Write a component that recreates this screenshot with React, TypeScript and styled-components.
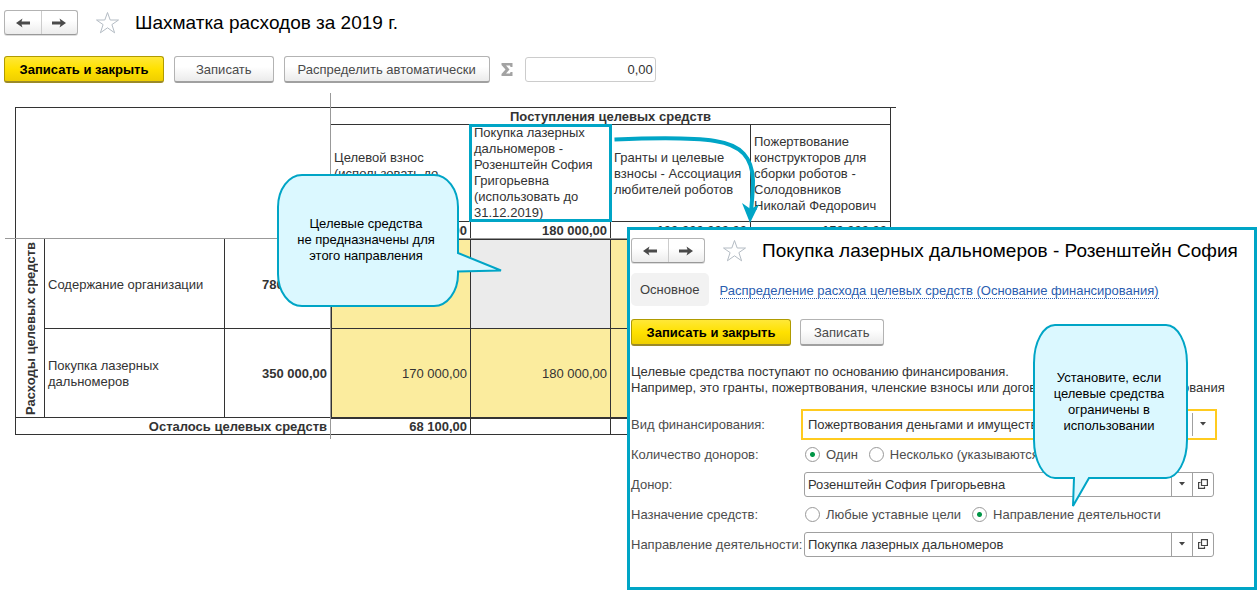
import React from 'react';
import styled, { createGlobalStyle, css } from 'styled-components';

const ACCENT = '#00a5c6';
const BUBBLE = '#dbf8ff';
const LINE = '#333';
const FREEZE = '#999';

const GlobalStyle = createGlobalStyle`
  *, *::before, *::after { box-sizing: border-box; }
  body {
    margin: 0;
    background: #fff;
    color: #333;
    font: 13px/16px 'Liberation Sans', Arial, sans-serif;
  }
  button, input, select { font: inherit; color: inherit; }
`;

const Page = styled.main`
  position: relative;
  min-height: 100vh;
`;

/* ---------- headers and command bars ---------- */

const TopArea = styled.div`
  display: flex;
  flex-direction: column;
  gap: 21px;
  padding: 10px 4px 0;
`;

const TitleBar = styled.header`
  display: flex;
  align-items: center;
  height: 25px;
`;

const NavGroup = styled.div`
  display: flex;
  width: 74px;
  height: 25px;
  border: 1px solid #b3b3b3;
  border-bottom-color: #999;
  border-radius: 3px;
  background: linear-gradient(#fff 40%, #ececec);
  box-shadow: 0 1px 0 #ddd;
`;

const NavButton = styled.button`
  flex: 1;
  display: flex;
  align-items: center;
  justify-content: center;
  padding: 0;
  border: 0;
  background: none;
  & + & { border-left: 1px solid #ccc; }
`;

const StarButton = styled.button`
  display: flex;
  margin: 0 15px 0 17px;
  padding: 0;
  border: 0;
  background: none;
`;

const Title = styled.h1`
  margin: 0;
  padding-top: 1px;
  color: #000;
  font-size: 19px;
  line-height: 24px;
  font-weight: 400;
  white-space: nowrap;
`;

const CommandBar = styled.div<{ $gap: number }>`
  display: flex;
  align-items: center;
  gap: ${p => p.$gap}px;
`;

const Button = styled.button<{ $primary?: boolean; $pad?: number }>`
  height: 27px;
  padding: 1px ${p => p.$pad ?? 13}px 0;
  border: 1px solid #b3b3b3;
  border-bottom: 2px solid #a0a0a0;
  border-radius: 3px;
  background: linear-gradient(#fff 40%, #ebebeb);
  color: #4a4a4a;
  white-space: nowrap;
  ${p => p.$primary && css`
    width: 160px;
    padding: 1px 0 0;
    border-color: #b09b00;
    border-bottom-color: #9b8a28;
    background: linear-gradient(#ffe838, #ffe100 50%, #efcf00);
    color: #000;
    font-weight: 700;
  `}
`;

const SumInput = styled.input`
  width: 131px;
  height: 25px;
  padding: 0 2px;
  border: 1px solid #ccc;
  border-radius: 3px;
  text-align: right;
`;

/* ---------- spreadsheet ---------- */

const Sheet = styled.section`
  position: relative;
  width: 892px;
  margin-top: 10px;
  padding: 14px 0 4px 15px;
  &::before, &::after {
    content: '';
    position: absolute;
    background: ${FREEZE};
  }
  &::before { left: 330px; top: 0; bottom: 0; width: 1px; }
  &::after { left: 5px; right: 0; top: 145px; height: 1px; }
`;

const SheetEdge = styled.div`
  width: 881px;
  border-top: 1px solid ${LINE};
`;

const Grid = styled.table`
  width: 876px;
  table-layout: fixed;
  border-collapse: separate;
  border-spacing: 0;
  border-left: 1px solid ${LINE};
`;

const Row = styled.tr<{ $h: number }>`
  height: ${p => p.$h}px;
`;

const cell = css`
  padding: 1px 3px 0;
  border: solid ${LINE};
  border-width: 0 1px 1px 0;
  line-height: 15px;
  vertical-align: middle;
`;

const Head = styled.th<{ $align?: string; $bold?: boolean; $marked?: boolean }>`
  ${cell}
  text-align: ${p => p.$align ?? 'left'};
  font-weight: ${p => (p.$bold ? 700 : 400)};
  ${p => !p.$bold && css`
    padding-top: ${p.$marked ? 0 : 2}px;
    line-height: 16px;
  `}
  ${p => p.$marked && css`
    position: relative;
    &::after {
      content: '';
      position: absolute;
      inset: -1px -2px -1px -2px;
      border: 3px solid ${ACCENT};
    }
  `}
`;

const Num = styled.td<{ $bold?: boolean; $fill?: string; $shade?: string }>`
  ${cell}
  text-align: right;
  font-weight: ${p => (p.$bold ? 700 : 400)};
  ${p => p.$fill && css`background: ${p.$fill};`}
  ${p => p.$shade && css`box-shadow: ${p.$shade};`}
`;

const Vertical = styled.span`
  display: block;
  margin: 0 auto;
  writing-mode: vertical-rl;
  transform: rotate(180deg);
  white-space: nowrap;
`;

const LinkArrow = styled.svg`
  position: absolute;
  left: 610px;
  top: 130px;
`;

/* ---------- dialog ---------- */

const Dialog = styled.section`
  position: absolute;
  left: 627px;
  right: 0;
  top: 227px;
  height: 363px;
  padding: 8px 0 0 1px;
  border: 3px solid ${ACCENT};
  background: #fff;
`;

const Tabs = styled.nav`
  display: flex;
  align-items: center;
  gap: 11px;
  margin: 10px 0 13px;
`;

const Tab = styled.span`
  padding: 9px 9px 8px;
  border-radius: 5px;
  background: #f2f2f2;
  color: #404040;
`;

const TabLink = styled.a`
  margin-top: 3px;
  border-bottom: 1px dotted #2a5db0;
  color: #2a5db0;
  line-height: 14px;
  text-decoration: none;
  white-space: nowrap;
`;

const Hint = styled.p`
  margin: 18px 0 13px;
  white-space: nowrap;
`;

const Form = styled.div`
  display: grid;
  grid-template-columns: 173px 1fr;
  grid-auto-rows: 30px;
  align-items: center;
  padding-right: 40px;
  color: #4d4d4d;
  white-space: nowrap;
`;

const Caption = styled.span`
  padding-top: 2px;
`;

const Field = styled.div<{ $active?: boolean }>`
  display: flex;
  height: 25px;
  border: 1px solid ${p => (p.$active ? 'transparent' : '#a0a0a0')};
  border-radius: ${p => (p.$active ? 0 : 3)}px;
  ${p => p.$active && css`
    outline: 2px solid #ffcb1f;
    outline-offset: 1px;
  `}
`;

const Combo = styled.div`
  position: relative;
  flex: 1;
  display: flex;
`;

const Select = styled.select`
  flex: 1;
  min-width: 0;
  padding: 2px 24px 0 3px;
  border: 0;
  outline: 0;
  appearance: none;
  background: none;
  color: #333;
`;

const Drop = styled.span`
  position: absolute;
  right: 0;
  top: 0;
  bottom: 0;
  width: 21px;
  display: flex;
  align-items: center;
  justify-content: center;
  border-left: 1px solid #a0a0a0;
  pointer-events: none;
`;

const OpenButton = styled.button`
  width: 21px;
  display: flex;
  align-items: center;
  justify-content: center;
  padding: 0;
  border: 0;
  border-left: 1px solid #a0a0a0;
  background: none;
`;

const Radios = styled.div`
  display: flex;
  gap: 11px;
  padding-left: 1px;
`;

const RadioLabel = styled.label`
  display: flex;
  align-items: center;
  gap: 6px;
`;

const Radio = styled.input`
  width: 15px;
  height: 15px;
  margin: 0;
  appearance: none;
  border: 1px solid #999;
  border-radius: 50%;
  background: #fff;
  &:checked { background: radial-gradient(circle, #009646 2px, #fff 3px); }
`;

/* ---------- callouts ---------- */

const Callout = styled.aside<{ $x: number; $y: number; $w: number; $h: number }>`
  position: absolute;
  left: ${p => p.$x}px;
  top: ${p => p.$y}px;
  width: ${p => p.$w}px;
  height: ${p => p.$h}px;
  display: flex;
  align-items: center;
  justify-content: center;
  padding-right: 4px;
  color: #000;
  text-align: center;
  white-space: pre-line;
`;

const Bubble = styled.svg`
  position: absolute;
  left: 0;
  top: 0;
  overflow: visible;
`;

const CalloutText = styled.p`
  position: relative;
  margin: 0;
`;

function TitleRow({ title }: { title: string }) {
  return (
    <TitleBar>
      <NavGroup>
        <NavButton aria-label="Назад">
          <svg width="16" height="12" viewBox="0 0 16 12">
            <path d="M1 6 7.500 1.500 6.500 4.500H15V7.500H6.500L7.500 10.500Z" fill="#4a4a4a" />
          </svg>
        </NavButton>
        <NavButton aria-label="Вперед">
          <svg width="16" height="12" viewBox="0 0 16 12">
            <path d="M15 6 8.500 1.500 9.500 4.500H1V7.500H9.500L8.500 10.500Z" fill="#4a4a4a" />
          </svg>
        </NavButton>
      </NavGroup>
      <StarButton aria-label="В избранное">
        <svg width="25" height="25" viewBox="0 0 25 25">
          <path
            d="M12.5 2.5 15.2 10H23.5L16.9 14.6 19.6 22.8 12.5 17.8 5.4 22.8 8.1 14.6 1.5 10H9.8Z"
            fill="#fff"
            stroke="#b4bcc4"
          />
        </svg>
      </StarButton>
      <Title>{title}</Title>
    </TitleBar>
  );
}

function ComboField(props: { id: string; value: string; active?: boolean }) {
  return (
    <Field $active={props.active}>
      <Combo>
        <Select id={props.id}>
          <option>{props.value}</option>
        </Select>
        <Drop>
          <svg width="6" height="4" viewBox="0 0 6 4">
            <path d="M0 0H6L3 3.5Z" fill="#444" />
          </svg>
        </Drop>
      </Combo>
      {!props.active && (
        <OpenButton aria-label="Открыть">
          <svg width="10" height="10" viewBox="0 0 10 10" fill="none" stroke="#444" strokeWidth="1.2">
            <path d="M3.5 .6H9.4V6.500H3.5ZM2.500 3.500H.6V9.400H6.500V7.500" />
          </svg>
        </OpenButton>
      )}
    </Field>
  );
}

const YELLOW = '#fbec9e';
const GREY = '#ebebeb';
const topEdge = `inset 0 1px 0 ${LINE}`;
const leftEdge = `inset 1px 0 0 ${LINE}`;
const bottomEdge = `0 1px 0 ${LINE}`;

export default function App() {
  return (
    <Page>
      <GlobalStyle />
      <TopArea>
        <TitleRow title="Шахматка расходов за 2019 г." />
        <CommandBar $gap={10}>
          <Button $primary>Записать и закрыть</Button>
          <Button $pad={21}>Записать</Button>
          <Button>Распределить автоматически</Button>
          <svg width="15" height="15" viewBox="0 0 15 15" role="img" aria-label="Сумма">
            <path
              d="M1.500 1H12.500V5H10.500L10 3.500H6L9.500 7.500 6 11.500H10L10.500 10H12.500V14H1.500V12L5.500 7.500 1.500 3Z"
              fill="#a3a3a3"
            />
          </svg>
          <SumInput aria-label="Сумма выделенных ячеек" defaultValue="0,00" />
        </CommandBar>
      </TopArea>

      <Sheet>
        <SheetEdge>
          <Grid>
            <colgroup>
              <col width="29" />
              <col width="180" />
              <col width="106" />
              <col width="140" />
              <col width="140" />
              <col width="140" />
              <col width="140" />
            </colgroup>
            <tbody>
              <Row $h={17}>
                <Num colSpan={3} rowSpan={3} />
                <Head colSpan={4} $align="center" $bold>Поступления целевых средств</Head>
              </Row>
              <Row $h={97}>
                <Head>Целевой взнос (использовать до 31.12.2019)</Head>
                <Head $marked>
                  Покупка лазерных дальномеров - Розенштейн София Григорьевна (использовать до 31.12.2019)
                </Head>
                <Head>Гранты и целевые взносы - Ассоциация любителей роботов</Head>
                <Head>Пожертвование конструкторов для сборки роботов - Солодовников Николай Федорович</Head>
              </Row>
              <Row $h={17}>
                <Num $bold>238 100,00</Num>
                <Num $bold>180 000,00</Num>
                <Num $bold>100 000 000,00</Num>
                <Num $bold>150 000,00</Num>
              </Row>
              <Row $h={90}>
                <Head rowSpan={2} $bold $align="center">
                  <Vertical>Расходы целевых средств</Vertical>
                </Head>
                <Head>Содержание организации</Head>
                <Num $bold>780 000,00</Num>
                <Num $fill={YELLOW} $shade={`${topEdge}, ${leftEdge}`} />
                <Num $fill={GREY} $shade={topEdge} />
                <Num $fill={YELLOW} $shade={topEdge} />
                <Num $fill={YELLOW} $shade={topEdge} />
              </Row>
              <Row $h={89}>
                <Head>Покупка лазерных дальномеров</Head>
                <Num $bold>350 000,00</Num>
                <Num $fill={YELLOW} $shade={`${bottomEdge}, ${leftEdge}`}>170 000,00</Num>
                <Num $fill={YELLOW} $shade={bottomEdge}>180 000,00</Num>
                <Num $fill={YELLOW} $shade={bottomEdge} />
                <Num $fill={YELLOW} $shade={bottomEdge} />
              </Row>
              <Row $h={17}>
                <Head colSpan={3} $bold $align="right">Осталось целевых средств</Head>
                <Num $bold>68 100,00</Num>
                <Num />
                <Num />
                <Num />
              </Row>
            </tbody>
          </Grid>
        </SheetEdge>
      </Sheet>

      <LinkArrow width="160" height="100" viewBox="610 130 160 100">
        <path
          d="M614.5 139.5C650 138 690 137 715 141C742 145 752 158 753 180C753 192 752 200 751 212"
          fill="none"
          stroke={ACCENT}
          strokeWidth="4"
        />
        <path d="M742 203 750.5 209 759 204.500 750 223Z" fill={ACCENT} />
      </LinkArrow>

      <Dialog>
        <TitleRow title="Покупка лазерных дальномеров - Розенштейн София" />
        <Tabs>
          <Tab>Основное</Tab>
          <TabLink href="#distribution">
            Распределение расхода целевых средств (Основание финансирования)
          </TabLink>
        </Tabs>
        <CommandBar $gap={9}>
          <Button $primary>Записать и закрыть</Button>
          <Button>Записать</Button>
        </CommandBar>
        <Hint>
          Целевые средства поступают по основанию финансирования.
          <br />
          Например, это гранты, пожертвования, членские взносы или договоры целевого финансирования
        </Hint>
        <Form>
          <Caption as="label" htmlFor="kind">Вид финансирования:</Caption>
          <ComboField id="kind" value="Пожертвования деньгами и имуществом" active />
          <Caption id="donors">Количество доноров:</Caption>
          <Radios role="radiogroup" aria-labelledby="donors">
            <RadioLabel><Radio type="radio" name="donors" defaultChecked /><Caption>Один</Caption></RadioLabel>
            <RadioLabel><Radio type="radio" name="donors" /><Caption>Несколько (указываются в поступлении)</Caption></RadioLabel>
          </Radios>
          <Caption as="label" htmlFor="donor">Донор:</Caption>
          <ComboField id="donor" value="Розенштейн София Григорьевна" />
          <Caption id="purpose">Назначение средств:</Caption>
          <Radios role="radiogroup" aria-labelledby="purpose">
            <RadioLabel><Radio type="radio" name="purpose" /><Caption>Любые уставные цели</Caption></RadioLabel>
            <RadioLabel><Radio type="radio" name="purpose" defaultChecked /><Caption>Направление деятельности</Caption></RadioLabel>
          </Radios>
          <Caption as="label" htmlFor="activity">Направление деятельности:</Caption>
          <ComboField id="activity" value="Покупка лазерных дальномеров" />
        </Form>
      </Dialog>

      <Callout $x={277} $y={174} $w={182} $h={132}>
        <Bubble width="226" height="134">
          <path
            d="M25 1H157A24 32 0 0 1 181 33V79L224 96.500 181 97.500V100A24 32 0 0 1 157 132H25A24 32 0 0 1 1 100V33A24 32 0 0 1 25 1Z"
            fill={BUBBLE}
            stroke={ACCENT}
            strokeWidth="2"
          />
        </Bubble>
        <CalloutText>{'Целевые средства\nне предназначены для\nэтого направления'}</CalloutText>
      </Callout>

      <Callout $x={1033} $y={325} $w={156} $h={154}>
        <Bubble width="157" height="184">
          <path
            d="M22 0H133A21 38 0 0 1 154 38V115A21 38 0 0 1 133 153H56L40 181 41 153H22A21 38 0 0 1 1 115V38A21 38 0 0 1 22 0Z"
            fill={BUBBLE}
            stroke={ACCENT}
            strokeWidth="2"
          />
        </Bubble>
        <CalloutText>{'Установите, если\nцелевые средства\nограничены в\nиспользовании'}</CalloutText>
      </Callout>
    </Page>
  );
}
